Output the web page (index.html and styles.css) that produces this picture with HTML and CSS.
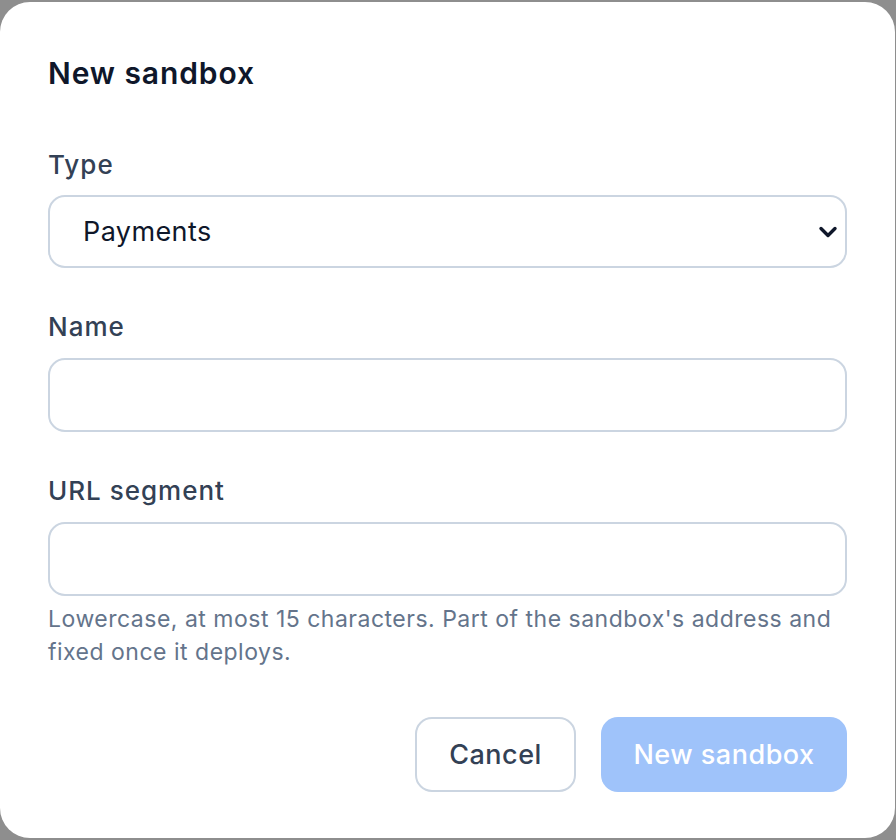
FILE: index.html
```html
<!DOCTYPE html>
<html lang="en">
<head>
<meta charset="utf-8">
<title>New sandbox</title>
<link rel="stylesheet" href="styles.css">
</head>
<body>
<div class="modal">
  <h1 class="title">New sandbox</h1>
  <div class="field field-first">
    <label class="label" for="type">Type</label>
    <div class="select-wrap">
      <div class="control select" id="type">Payments</div>
      <svg class="chevron" width="20" height="14" viewBox="0 0 20 14"><path d="M3 3.5 L10 10.5 L17 3.5" fill="none" stroke="#0f172a" stroke-width="3.4" stroke-linecap="round" stroke-linejoin="round"/></svg>
    </div>
  </div>
  <div class="field">
    <label class="label">Name</label>
    <div class="control input"></div>
  </div>
  <div class="field">
    <label class="label">URL segment</label>
    <div class="control input"></div>
    <p class="help">Lowercase, at most 15 characters. Part of the sandbox's address and fixed once it deploys.</p>
  </div>
  <div class="actions">
    <button class="btn btn-secondary">Cancel</button>
    <button class="btn btn-primary">New sandbox</button>
  </div>
</div>
</body>
</html>
```
FILE: styles.css
```css
* { box-sizing: border-box; }
html, body { margin: 0; padding: 0; }
body {
  background: #8e8e8e;
  font-family: Inter, "Noto Sans", "Liberation Sans", sans-serif;
  width: 896px;
  height: 840px;
  overflow: hidden;
}
.modal {
  margin: 2px 1px 0 0;
  width: 895px;
  height: 836px;
  background: #ffffff;
  border-radius: 30px;
  padding: 51px 48px 0 48px;
}
.title {
  margin: 0;
  font-size: 30px;
  letter-spacing: 0.9px;
  line-height: 40px;
  font-weight: 600;
  color: #0f172a;
}
.field { margin-top: 43px; display: flex; flex-direction: column; }
.field-first { margin-top: 56px; }
.label {
  font-size: 26px;
  letter-spacing: 1px;
  line-height: 32px;
  font-weight: 500;
  color: #334155;
  margin-bottom: 15px;
}
.field-first .label { margin-bottom: 14px; }
.select-wrap { position: relative; }
.control {
  height: 73px;
  border: 2px solid #cbd5e1;
  border-radius: 17px;
  background: #fff;
  width: 799px;
}
.input { height: 74px; }
.select {
  display: flex;
  align-items: center;
  padding-left: 33px;
  font-size: 27px;
  letter-spacing: 0.4px;
  color: #0f172a;
}
.chevron { position: absolute; right: 9px; top: 30px; }
.help {
  margin: 7px 0 0 0;
  font-size: 23px;
  letter-spacing: 0.5px;
  line-height: 33px;
  color: #64748b;
}
.actions {
  display: flex;
  justify-content: flex-end;
  gap: 25px;
  margin-top: 48px;
}
.btn {
  height: 75px;
  border-radius: 17px;
  font-family: inherit;
  font-size: 27px;
  letter-spacing: 0.5px;
  font-weight: 500;
  padding: 0;
}
.btn-secondary {
  width: 161px;
  background: #fff;
  border: 2px solid #cbd5e1;
  color: #334155;
}
.btn-primary {
  width: 246px;
  background: #9fc3fa;
  border: none;
  color: #ffffff;
}
```
